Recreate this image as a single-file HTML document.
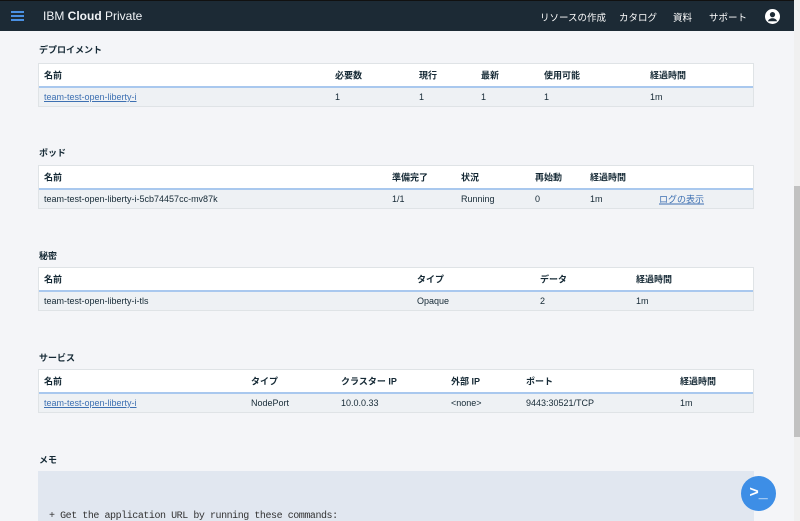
<!DOCTYPE html>
<html><head><meta charset="utf-8">
<style>
*{box-sizing:border-box;margin:0;padding:0}
html,body{width:800px;height:521px;overflow:hidden}
body{background:#f4f5f8;font-family:"Liberation Sans","Noto Sans CJK JP",sans-serif;color:#152935;position:relative}
.hdr{position:absolute;left:0;top:0;width:794px;height:31px;background:#1c2a35;border-top:1px solid #111;color:#fff}
.sb{position:absolute;left:794px;top:0;width:6px;height:521px;background:#f0f0f0}
.sb .t{position:absolute;left:0;top:186px;width:6px;height:251px;background:#c1c1c1}
.ham{position:absolute;left:11px;width:13px;height:2px;background:#4a90e2}
.title{position:absolute;left:43px;top:8px;font-size:12px;color:#f0f3f6}
.nav{position:absolute;top:9px;font-size:9.5px;color:#fff;white-space:nowrap}
.sec{position:absolute;left:39px;font-size:9px;font-weight:bold;color:#152935}
.tbl{position:absolute;left:38px;width:716px;border:1px solid #dfe3e6;font-size:9px}
.tbl .h{height:24px;background:#fff;border-bottom:2px solid #a9c8ee;position:relative;font-weight:bold}
.tbl .d{height:18px;background:#eef1f4;position:relative}
.tbl span{position:absolute;top:50%;transform:translateY(-50%);white-space:nowrap}
a{color:#3d70b2;text-decoration:underline}
.memo{position:absolute;left:38px;top:471px;width:716px;height:60px;background:#e1e7f0}
.memo div{position:absolute;left:11px;top:40px;font-family:"Liberation Mono",monospace;font-size:10px;letter-spacing:-0.45px;color:#333;white-space:pre}
.fab{position:absolute;left:741px;top:476px;width:35px;height:35px;border-radius:50%;background:#3d8ee6;color:#fff;font-size:16px;font-weight:bold;text-align:center;line-height:33px}
</style></head><body>
<div class="hdr">
<div class="ham" style="top:10px"></div><div class="ham" style="top:14px"></div><div class="ham" style="top:18px"></div>
<div class="title">IBM <b>Cloud</b> Private</div>
<div class="nav" style="left:540px">リソースの作成</div>
<div class="nav" style="left:619px">カタログ</div>
<div class="nav" style="left:673px">資料</div>
<div class="nav" style="left:709px">サポート</div>
<svg style="position:absolute;left:765px;top:8px" width="15" height="15" viewBox="0 0 16 16"><circle cx="8" cy="8" r="8" fill="#fff"/><circle cx="8" cy="6" r="2.8" fill="#1c2a35"/><path d="M3 13c1.2-2.5 3-3.2 5-3.2s3.8.7 5 3.2" fill="#1c2a35"/></svg>
</div>
<div class="sb"><div class="t"></div></div>

<div class="sec" style="top:43px">デプロイメント</div>
<div class="tbl" style="top:63px">
<div class="h"><span style="left:5px">名前</span><span style="left:296px">必要数</span><span style="left:380px">現行</span><span style="left:442px">最新</span><span style="left:505px">使用可能</span><span style="left:611px">経過時間</span></div>
<div class="d"><span style="left:5px"><a>team-test-open-liberty-i</a></span><span style="left:296px">1</span><span style="left:380px">1</span><span style="left:442px">1</span><span style="left:505px">1</span><span style="left:611px">1m</span></div>
</div>

<div class="sec" style="top:146px">ポッド</div>
<div class="tbl" style="top:165px">
<div class="h"><span style="left:5px">名前</span><span style="left:353px">準備完了</span><span style="left:422px">状況</span><span style="left:496px">再始動</span><span style="left:551px">経過時間</span></div>
<div class="d"><span style="left:5px">team-test-open-liberty-i-5cb74457cc-mv87k</span><span style="left:353px">1/1</span><span style="left:422px">Running</span><span style="left:496px">0</span><span style="left:551px">1m</span><span style="left:620px"><a>ログの表示</a></span></div>
</div>

<div class="sec" style="top:249px">秘密</div>
<div class="tbl" style="top:267px">
<div class="h"><span style="left:5px">名前</span><span style="left:378px">タイプ</span><span style="left:501px">データ</span><span style="left:597px">経過時間</span></div>
<div class="d"><span style="left:5px">team-test-open-liberty-i-tls</span><span style="left:378px">Opaque</span><span style="left:501px">2</span><span style="left:597px">1m</span></div>
</div>

<div class="sec" style="top:351px">サービス</div>
<div class="tbl" style="top:369px">
<div class="h"><span style="left:5px">名前</span><span style="left:212px">タイプ</span><span style="left:302px">クラスター IP</span><span style="left:412px">外部 IP</span><span style="left:487px">ポート</span><span style="left:641px">経過時間</span></div>
<div class="d"><span style="left:5px"><a>team-test-open-liberty-i</a></span><span style="left:212px">NodePort</span><span style="left:302px">10.0.0.33</span><span style="left:412px">&lt;none&gt;</span><span style="left:487px">9443:30521/TCP</span><span style="left:641px">1m</span></div>
</div>

<div class="sec" style="top:453px">メモ</div>
<div class="memo"><div>+ Get the application URL by running these commands:</div></div>
<div class="fab">&gt;_</div>
</body></html>
